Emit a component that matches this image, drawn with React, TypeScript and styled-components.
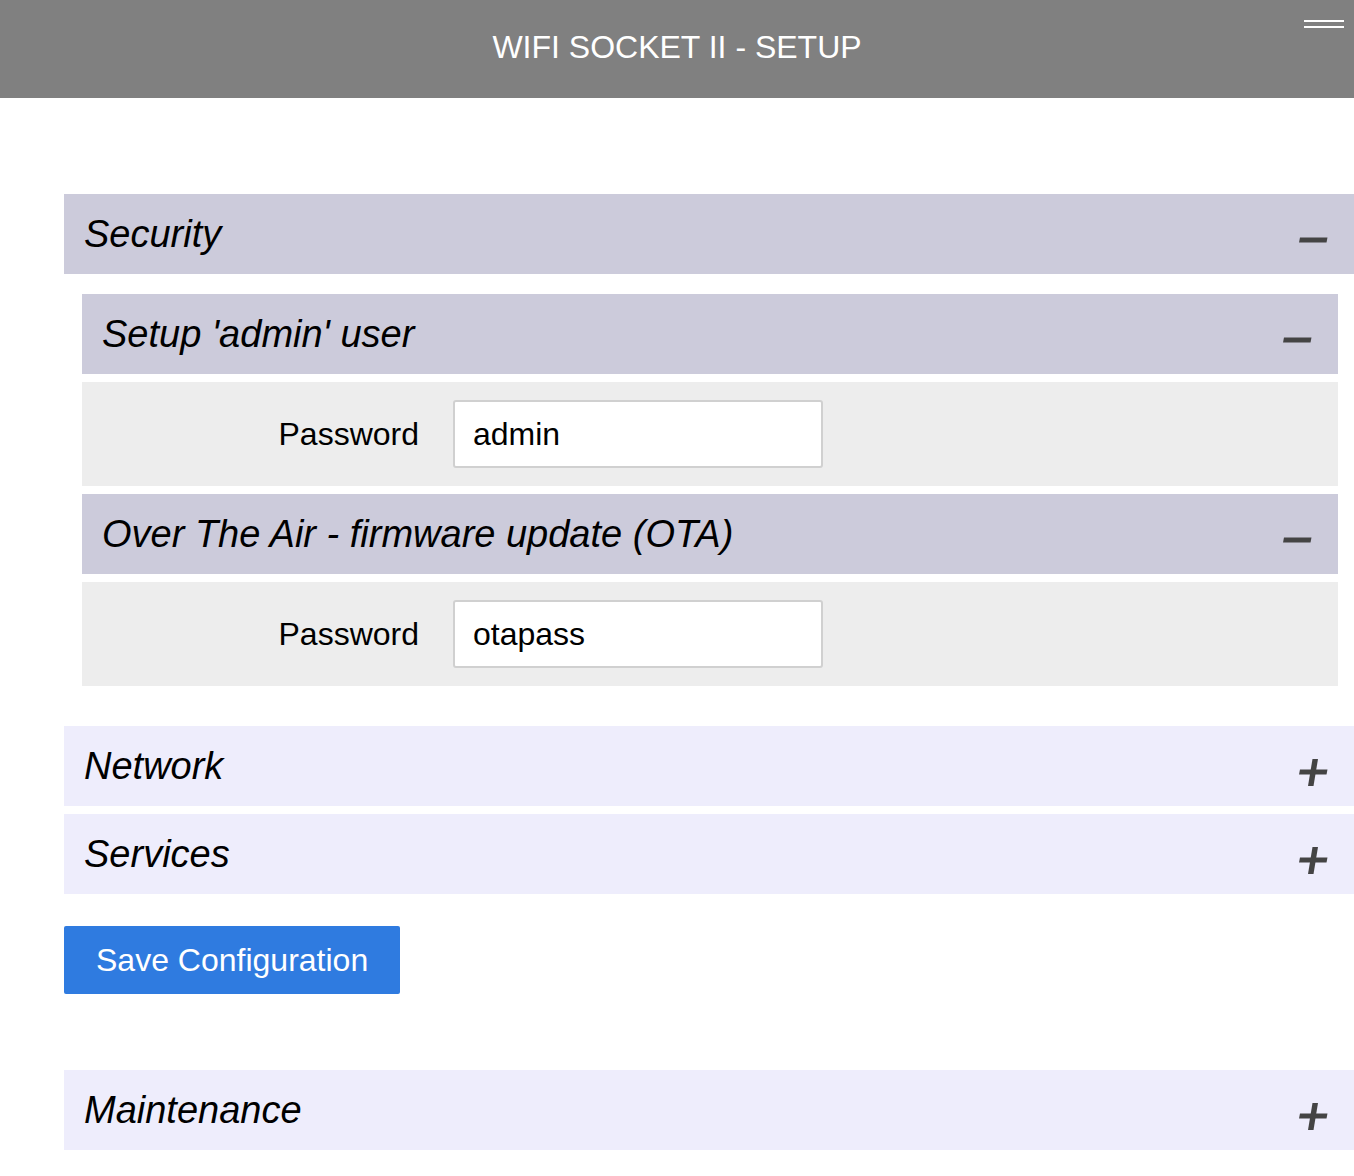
import React from "react";
import styled, { createGlobalStyle } from "styled-components";

const GlobalStyle = createGlobalStyle`
  html, body {
    margin: 0;
    padding: 0;
    background: #ffffff;
    font-family: "Liberation Sans", Arial, Helvetica, sans-serif;
    color: #000;
  }
  * { box-sizing: border-box; }
`;

const TopBar = styled.header`
  position: relative;
  height: 98px;
  background: #808080;
  display: flex;
  align-items: center;
  justify-content: center;
  padding-bottom: 4px;
`;

const Title = styled.h1`
  margin: 0;
  font-size: 32px;
  font-weight: normal;
  color: #ffffff;
  letter-spacing: 0;
`;

const MenuButton = styled.button`
  position: absolute;
  top: 20px;
  right: 10px;
  width: 40px;
  height: 8px;
  padding: 0;
  border: none;
  background: transparent;
  display: flex;
  flex-direction: column;
  justify-content: space-between;
  cursor: pointer;
`;

const MenuLine = styled.span`
  display: block;
  height: 2px;
  width: 100%;
  background: #ffffff;
`;

const Main = styled.main`
  display: flex;
  flex-direction: column;
  gap: 8px;
  padding: 96px 0 40px 64px;
`;

const Block = styled.section<{ $before?: number; $after?: number }>`
  display: flex;
  flex-direction: column;
  gap: 8px;
  margin-top: ${(p) => p.$before ?? 0}px;
  margin-bottom: ${(p) => p.$after ?? 0}px;
`;

const SectionHeader = styled.div<{ $open: boolean }>`
  height: 80px;
  display: flex;
  align-items: center;
  justify-content: space-between;
  padding: 0 26px 0 20px;
  background: ${(p) => (p.$open ? "#cccbdb" : "#eeedfc")};
  cursor: pointer;
`;

const SectionTitle = styled.h2`
  margin: 0;
  font-size: 38px;
  font-style: italic;
  font-weight: normal;
  color: #000;
`;

const ToggleIcon = styled.svg`
  width: 30px;
  height: 30px;
  margin-top: 12px;
  flex: none;
`;

const SectionBody = styled.div`
  display: flex;
  flex-direction: column;
  gap: 8px;
  padding: 12px 16px 0 18px;
`;

const FieldRow = styled.div`
  display: grid;
  grid-template-columns: 337px 370px;
  column-gap: 34px;
  align-items: center;
  padding: 18px 0;
  background: #ededed;
`;

const Label = styled.label`
  font-size: 32px;
  text-align: right;
  color: #000;
`;

const TextInput = styled.input`
  height: 68px;
  width: 370px;
  padding: 0 18px;
  font-family: "Liberation Sans", Arial, Helvetica, sans-serif;
  font-size: 32px;
  color: #000;
  background: #fff;
  border: 2px solid #d0d0d0;
  border-radius: 3px;
  outline: none;
`;

const SaveButton = styled.button`
  align-self: flex-start;
  height: 68px;
  padding: 0 32px;
  margin-top: 24px;
  border: none;
  border-radius: 2px;
  background: #2f7be0;
  color: #fff;
  font-family: "Liberation Sans", Arial, Helvetica, sans-serif;
  font-size: 32px;
  cursor: pointer;
`;

const Toggle = ({ open }: { open: boolean }) => (
  <ToggleIcon viewBox="0 0 30 30">
    <polygon points="2,12.5 29.5,12.5 28.5,17.5 1,17.5" fill="#444" />
    {!open && <polygon points="14.5,2 20,2 15.5,29 10,29" fill="#444" />}
  </ToggleIcon>
);

const Header = ({ title, open }: { title: string; open: boolean }) => (
  <SectionHeader $open={open}>
    <SectionTitle>{title}</SectionTitle>
    <Toggle open={open} />
  </SectionHeader>
);

const Field = ({ label, value }: { label: string; value: string }) => (
  <FieldRow>
    <Label>{label}</Label>
    <TextInput type="text" defaultValue={value} />
  </FieldRow>
);

export default function App() {
  return (
    <>
      <GlobalStyle />
      <TopBar>
        <Title>WIFI SOCKET II - SETUP</Title>
        <MenuButton aria-label="menu">
          <MenuLine />
          <MenuLine />
        </MenuButton>
      </TopBar>
      <Main>
        <Block $after={32}>
          <Header title="Security" open />
          <SectionBody>
            <Header title="Setup 'admin' user" open />
            <Field label="Password" value="admin" />
            <Header title="Over The Air - firmware update (OTA)" open />
            <Field label="Password" value="otapass" />
          </SectionBody>
        </Block>
        <Header title="Network" open={false} />
        <Header title="Services" open={false} />
        <SaveButton>Save Configuration</SaveButton>
        <Block $before={68}>
          <Header title="Maintenance" open={false} />
        </Block>
      </Main>
    </>
  );
}
